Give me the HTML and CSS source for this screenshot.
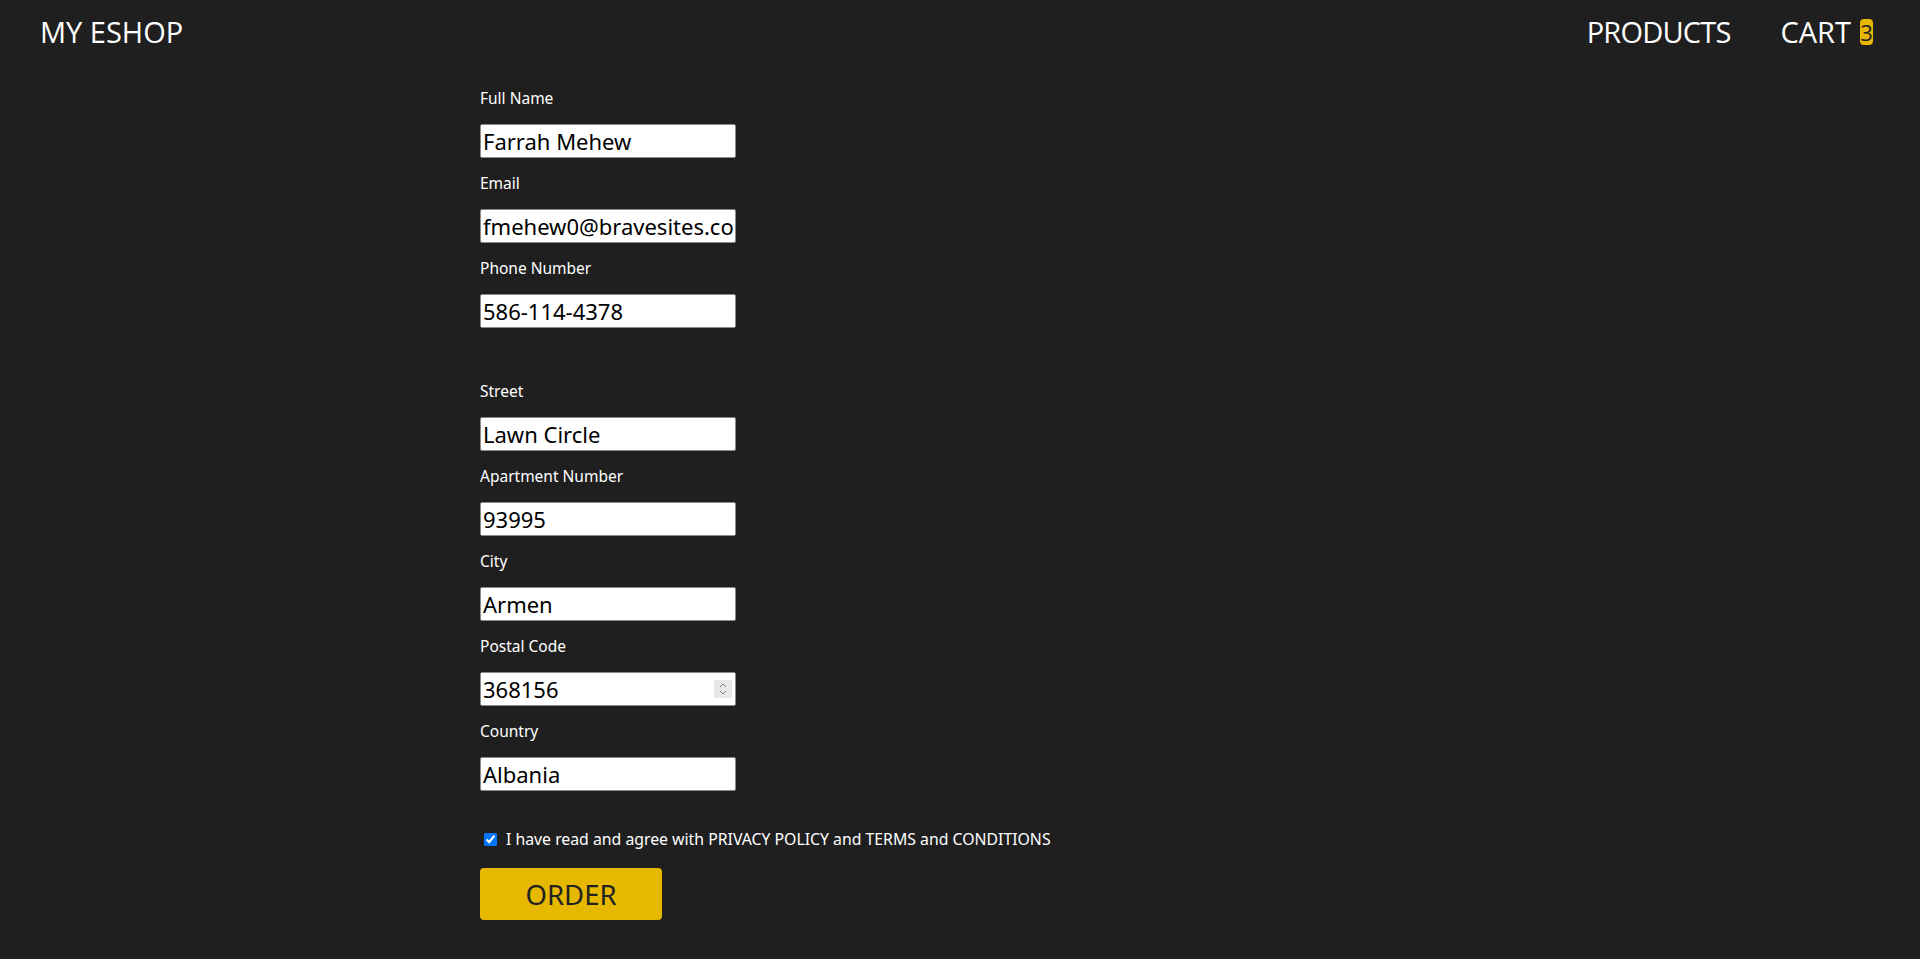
FILE: index.html
```html
<!DOCTYPE html>
<html lang="en">
<head>
<meta charset="utf-8">
<title>My Eshop - Checkout</title>
<link rel="stylesheet" href="styles.css">
</head>
<body>
<header class="topbar">
  <a class="logo" href="#">MY ESHOP</a>
  <nav class="nav">
    <a class="nav-link nav-link-products" href="#">PRODUCTS</a>
    <a class="nav-link" href="#">CART<span class="badge">3</span></a>
  </nav>
</header>
<main class="checkout">
  <form class="form">
    <section class="group">
      <div class="field">
        <label class="label">Full Name</label>
        <input class="input" type="text" value="Farrah Mehew">
      </div>
      <div class="field">
        <label class="label">Email</label>
        <input class="input" type="text" value="fmehew0@bravesites.com">
      </div>
      <div class="field">
        <label class="label">Phone Number</label>
        <input class="input" type="text" value="586-114-4378">
      </div>
    </section>
    <section class="group group-address">
      <div class="field">
        <label class="label">Street</label>
        <input class="input" type="text" value="Lawn Circle">
      </div>
      <div class="field">
        <label class="label">Apartment Number</label>
        <input class="input" type="text" value="93995">
      </div>
      <div class="field">
        <label class="label">City</label>
        <input class="input" type="text" value="Armen">
      </div>
      <div class="field">
        <label class="label">Postal Code</label>
        <div class="input-wrap">
          <input class="input" type="text" value="368156">
          <span class="spinner">
            <svg width="10" height="14" viewBox="0 0 10 14"><path d="M2 5 L5 2 L8 5" fill="none" stroke="#7a7a7a" stroke-width="1"/><path d="M2 9 L5 12 L8 9" fill="none" stroke="#7a7a7a" stroke-width="1"/></svg>
          </span>
        </div>
      </div>
      <div class="field">
        <label class="label">Country</label>
        <input class="input" type="text" value="Albania">
      </div>
    </section>
    <label class="agree">
      <input class="check" type="checkbox" checked>
      <span>I have read and agree with PRIVACY POLICY and TERMS and CONDITIONS</span>
    </label>
    <button class="order" type="button">ORDER</button>
  </form>
</main>
</body>
</html>
```
FILE: styles.css
```css
html, body {
  margin: 0;
  padding: 0;
  background: #1f1f1f;
  color: #ffffff;
  font-family: "Noto Sans", "Open Sans", sans-serif;
}

.topbar {
  height: 64px;
  display: flex;
  align-items: center;
  justify-content: space-between;
  padding: 0 47px 0 40px;
}

.logo,
.nav-link {
  font-family: "Open Sans", "Noto Sans", sans-serif;
  font-size: 29px;
  color: #ffffff;
  text-decoration: none;
  line-height: 40px;
}

.nav-link-products {
  letter-spacing: -0.8px;
}

.nav {
  display: flex;
  align-items: center;
  gap: 50px;
}

.badge {
  display: inline-block;
  margin-left: 9px;
  background: #e6b800;
  color: #222;
  font-size: 22px;
  line-height: 26px;
  width: 13px;
  text-align: center;
  border-radius: 4px;
  vertical-align: 2px;
}

.checkout {
  padding: 25px 0 40px 480px;
}

.form {
  display: flex;
  flex-direction: column;
  align-items: flex-start;
}

.group {
  display: flex;
  flex-direction: column;
  gap: 16px;
}

.group-address {
  margin-top: 54px;
}

.field {
  display: flex;
  flex-direction: column;
  gap: 16px;
}

.label {
  font-size: 15.5px;
  line-height: 19px;
  color: #ffffff;
}

.input {
  box-sizing: border-box;
  width: 256px;
  height: 34px;
  margin: 0;
  padding: 1px 2px;
  border: 1px solid #8a8a8a;
  border-radius: 2px;
  background: #ffffff;
  color: #000000;
  font-family: "Noto Sans", sans-serif;
  font-size: 22px;
}

.input-wrap {
  position: relative;
  width: 256px;
}

.spinner {
  position: absolute;
  right: 4px;
  top: 8px;
  width: 18px;
  height: 18px;
  background: #e8e8e8;
  display: flex;
  align-items: center;
  justify-content: center;
}

.agree {
  display: flex;
  align-items: center;
  gap: 9px;
  margin-top: 37px;
  height: 22px;
  font-size: 15.8px;
  line-height: 22px;
}

.check {
  width: 13px;
  height: 13px;
  margin: 0 0 0 4px;
}

.order {
  margin-top: 18px;
  width: 182px;
  height: 52px;
  border: none;
  border-radius: 4px;
  background: #e6b800;
  color: #222222;
  font-family: "Noto Sans", sans-serif;
  font-size: 27.5px;
  cursor: pointer;
}
```
